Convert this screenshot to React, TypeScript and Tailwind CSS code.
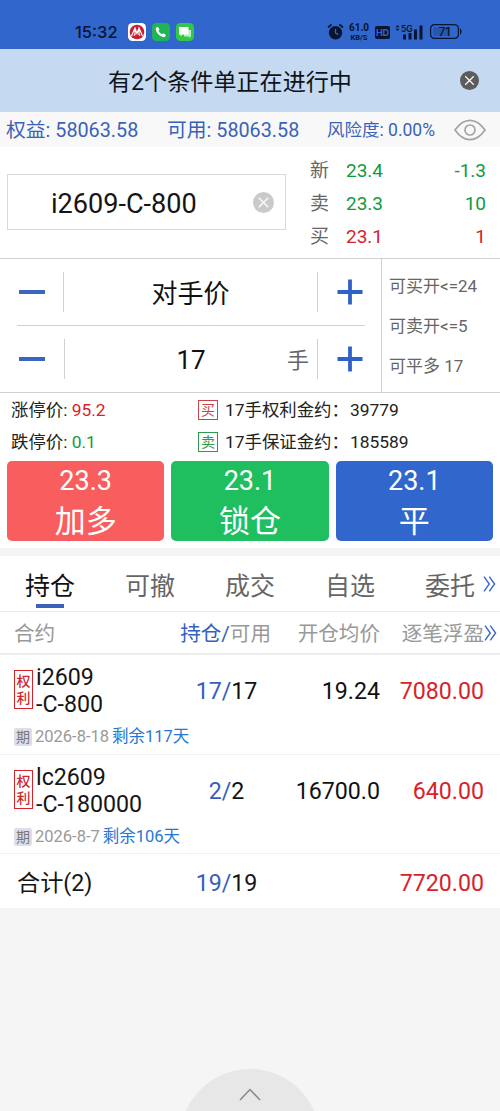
import { useState } from 'react'

const QUOTES = [
  { label: '新', price: '23.4', value: '-1.3', color: 'text-[#0f9b3c]' },
  { label: '卖', price: '23.3', value: '10', color: 'text-[#0f9b3c]' },
  { label: '买', price: '23.1', value: '1', color: 'text-[#d8222a]' },
]

const ACTIONS = [
  { price: '23.3', label: '加多', color: 'bg-[#f95e5e]' },
  { price: '23.1', label: '锁仓', color: 'bg-[#1fbf60]' },
  { price: '23.1', label: '平', color: 'bg-[#3166cc]' },
]

const TABS = ['持仓', '可撤', '成交', '自选', '委托']

const POSITIONS = [
  { name: 'i2609', strike: '-C-800', date: '2026-8-18', left: '剩余117天', held: '17', free: '17', avg: '19.24', profit: '7080.00' },
  { name: 'lc2609', strike: '-C-180000', date: '2026-8-7', left: '剩余106天', held: '2', free: '2', avg: '16700.0', profit: '640.00' },
]

function StatusBar() {
  return (
    <div className="flex h-[49px] items-start bg-[#3166cc] pt-[22px] pl-[75px] text-[#081430]">
      <span className="w-[53px] font-['Inter'] text-[16.5px] leading-5 font-medium">15:32</span>
      <svg className="mt-px h-[18px] w-[18px]" viewBox="0 0 18 18">
        <rect width="18" height="18" rx="4.5" fill="#fff" />
        <circle cx="9" cy="9" r="7.3" fill="#c9202f" />
        <path d="M3.5 13 7 5l2 5.500L11 5l3.500 8M7 5v6.500l-1.200 1M11 5v6.500l1.200 1" fill="none" stroke="#fff" strokeWidth="1.2" />
      </svg>
      <svg className="mt-px ml-[6px] h-[18px] w-[18px]" viewBox="0 0 18 18">
        <rect width="18" height="18" rx="4.5" fill="#20b554" />
        <path d="M4.6 4.3 6 3.9l1.500 2.700-1 1.200c.8 1.500 1.900 2.600 3.400 3.400l1.200-1 2.700 1.500-.4 1.500c-.4.9-1.400 1.200-2.500.9C7.500 13.200 4.800 10.500 3.900 7c-.3-1.200 0-2.200.7-2.700Z" fill="#fff" />
      </svg>
      <svg className="mt-px ml-[6px] h-[18px] w-[18px]" viewBox="0 0 18 18">
        <rect width="18" height="18" rx="4.5" fill="#34c847" />
        <path d="M8 7h7v6.500h-.8V15l-2-1.500H8Z" fill="#b9efbf" />
        <path d="M3 4h9.500v7.500H6.800L4.500 13.300v-1.800H3Z" fill="#fff" />
      </svg>
      <svg className="ml-[133px] h-[19px] w-[17px]" viewBox="0 0 17 19" fill="currentColor">
        <circle cx="8.5" cy="10.8" r="6.7" />
        <path d="M1 5.500 4.600 2.300M16 5.500 12.400 2.300" stroke="currentColor" strokeWidth="1.7" />
        <path d="M8.500 7v4l2.600 1.600" fill="none" stroke="#3166cc" strokeWidth="1.3" />
      </svg>
      <div className="ml-[4px] w-[22px] text-center font-['Roboto'] font-bold">
        <div className="text-[10px] leading-[11px]">61.0</div>
        <div className="text-[7.5px] leading-[9px]">KB/S</div>
      </div>
      <div className="mt-1 ml-[5px] h-[13px] w-[15px] rounded-[2px] bg-[#081430] text-center font-['Inter'] text-[9px] leading-[13px] font-bold text-[#3166cc]">
        HD
      </div>
      <svg className="mt-[2px] ml-[5px] h-[16px] w-[28px]" viewBox="0 0 28 16" fill="currentColor">
        <path d="M.5 3.300 2.500 1l2 2.300ZM.5 4.700l2 2.300 2-2.300Z" />
        <text x="6" y="7.5" fontSize="8.5" fontWeight="600" fontFamily="Inter">5G</text>
        <path d="M8 10.500h3v5H8ZM13.500 9h3v6.500h-3ZM19 5.500h3v10h-3ZM24.500 1.500h3v14h-3Z" />
      </svg>
      <svg className="mt-[2px] ml-[7px] h-[15px] w-[32px]" viewBox="0 0 32 15">
        <rect x=".6" y=".6" width="27.8" height="13.8" rx="4" fill="none" stroke="currentColor" strokeWidth="1.2" />
        <path d="M30 4.500c2 .7 2 5.300 0 6Z" fill="currentColor" />
        <rect x="3" y="3" width="17" height="9" rx="1.5" fill="#2857ae" />
        <text x="14.5" y="11.5" textAnchor="middle" fontSize="11.5" fontWeight="500" fontFamily="Inter" fill="currentColor">71</text>
      </svg>
    </div>
  )
}

function CloseIcon({ size, bg }: { size: string; bg: string }) {
  return (
    <svg className={size} viewBox="0 0 20 20">
      <circle cx="10" cy="10" r="10" fill={bg} />
      <path d="M5.500 5.500l9 9M14.500 5.500l-9 9" stroke="#fff" strokeWidth="1.2" />
    </svg>
  )
}

function EyeIcon() {
  return (
    <svg className="h-[22px] w-8" viewBox="0 0 32 22" fill="none" stroke="#a3a3a3" strokeWidth="1.7">
      <path d="M1 11C5.500 4.500 10.500 1.300 16 1.300S26.500 4.500 31 11c-4.500 6.500-9.500 9.700-15 9.700S5.500 17.500 1 11Z" />
      <circle cx="16" cy="11" r="5" />
    </svg>
  )
}

function MoreIcon() {
  return (
    <svg className="h-4 w-[13px] shrink-0" viewBox="0 0 13 16" fill="none" stroke="#3a66c8" strokeWidth="1.4">
      <path d="M1 .7 6.300 8 1 15.300M6.300.7 11.600 8l-5.300 7.300" />
    </svg>
  )
}

function Stepper({ value, unit }: { value: string; unit?: string }) {
  return (
    <div className="flex h-[66px] items-center">
      <button className="flex w-[46px] pl-[2px]">
        <span className="h-1 w-[26px] bg-[#3a66c0]" />
      </button>
      <div className={`h-10 w-px bg-[#cfcfcf] ${unit ? 'ml-px' : ''}`} />
      <div className={`relative flex-1 text-center text-[26px] leading-10 text-[#111] ${unit ? 'pt-px' : 'pt-1'}`}>
        {value}
        {unit && <span className="absolute top-[2px] right-[8px] text-[22px] text-[#666]">{unit}</span>}
      </div>
      <div className="h-10 w-px bg-[#cfcfcf]" />
      <button className="flex w-[47px] pl-[19px]">
        <svg className="h-[26px] w-[26px] shrink-0" viewBox="0 0 26 26" stroke="#2f62c8" strokeWidth="3.8">
          <path d="M.5 13h25M13 .5v25" />
        </svg>
      </button>
    </div>
  )
}

function PositionRow({ item }: { item: (typeof POSITIONS)[number] }) {
  return (
    <div className="h-[99.5px] border-b border-[#f1f1f1] pl-[14px]">
      <div className="flex pt-[9px]">
        <div className="mt-[6px] h-[39px] w-[19px] border border-[#d8222a] pt-[2px] text-center text-[14px] leading-[17px] font-medium text-[#cf2730]">
          权
          <br />
          利
        </div>
        <div className="w-[125px] pl-[3px] text-[23.2px] leading-[27px] text-[#151515]">
          {item.name}
          <br />
          {item.strike}
        </div>
        <div className="w-[137px] text-center text-[23.2px] leading-[55px] text-[#111]">
          <span className="text-[#3460c0]">{item.held}/</span>
          {item.free}
        </div>
        <div className="w-[85px] text-right text-[23.2px] leading-[55px] text-[#111]">{item.avg}</div>
        <div className="w-[104px] text-right text-[23.2px] leading-[55px] text-[#d8222a]">{item.profit}</div>
      </div>
      <div className="mt-[8px] flex items-center text-[16.5px] leading-5">
        <span className="h-[18px] w-[18px] rounded-[2px] bg-[#dddeea] text-center text-[14px] leading-[18px] text-[#777]">期</span>
        <span className="ml-[3px] text-[#999]">{item.date}</span>
        <span className="ml-[3px] text-[#2478d4]">{item.left}</span>
      </div>
    </div>
  )
}

export default function App() {
  const [tab, setTab] = useState('持仓')

  return (
    <div className="flex h-[1111px] w-[500px] flex-col overflow-hidden bg-white font-['Roboto','Noto_Sans_CJK_SC',sans-serif]">
      <StatusBar />

      {/* Notice */}
      <div className="flex h-[63px] items-center bg-[#c5d9f1] pr-[21px] text-[#101418]">
        <span className="flex-1 pt-[4px] text-center text-[23.1px] leading-8">有2个条件单正在进行中</span>
        <CloseIcon size="h-[19px] w-[19px]" bg="#5c5c5c" />
      </div>

      {/* Account */}
      <div className="flex h-[35px] items-center bg-[#f8f8f8] pl-[6px] text-[19.8px] whitespace-nowrap text-[#3a62b8]">
        <span className="w-[161px] pt-[2px]">权益: 58063.58</span>
        <span className="w-[160px] pt-[2px]">可用: 58063.58</span>
        <span className="w-[127px] pt-[2px] text-[17.5px]">风险度: 0.00%</span>
        <EyeIcon />
      </div>

      {/* Contract and quote */}
      <div className="flex h-[112px] border-b border-[#d0d0d0] pl-[7px]">
        <div className="mt-[27px] flex h-[56px] w-[279px] items-center border border-[#d9d9d9] pr-[11px] pl-[43px]">
          <span className="flex-1 pt-[4px] text-[27.1px] text-[#151515]">i2609-C-800</span>
          <CloseIcon size="h-[21px] w-[21px]" bg="#cacaca" />
        </div>
        <div className="mt-[7.5px] ml-[24px] w-[176px]">
          {QUOTES.map((q) => (
            <div key={q.label} className={`flex h-[33.3px] items-center text-[19px] ${q.color}`}>
              <span className="w-9 text-[#666]">{q.label}</span>
              <span className="flex-1">{q.price}</span>
              <span>{q.value}</span>
            </div>
          ))}
        </div>
      </div>

      {/* Order form */}
      <div className="flex h-[134px] border-b border-[#d0d0d0]">
        <div className="w-[381px] pr-[16px] pl-[17px]">
          <Stepper value="对手价" />
          <div className="h-px bg-[#d0d0d0]" />
          <Stepper value="17" unit="手" />
        </div>
        <div className="flex-1 border-l border-[#d0d0d0] pt-[7px] pl-[7px] text-[17px] leading-10 text-[#666]">
          <div>可买开&lt;=24</div>
          <div>可卖开&lt;=5</div>
          <div>可平多 17</div>
        </div>
      </div>

      {/* Price limits */}
      <div className="grid h-[68px] grid-cols-[187px_1fr] content-start pt-px pl-[11px] text-[17.4px] leading-8 text-[#222]">
        <div>涨停价: <span className="text-[#d8222a]">95.2</span></div>
        <div className="flex items-center">
          <span className="mr-[7px] h-5 w-5 border border-[#c9444a] text-center text-[14px] leading-[18px] text-[#c9444a]">买</span>
          <span className="w-[125px]">17手权利金约：</span>
          <span>39779</span>
        </div>
        <div>跌停价: <span className="text-[#0f9b3c]">0.1</span></div>
        <div className="flex items-center">
          <span className="mr-[7px] h-5 w-5 border border-[#2d9a4f] text-center text-[14px] leading-[18px] text-[#2d9a4f]">卖</span>
          <span className="w-[125px]">17手保证金约：</span>
          <span>185589</span>
        </div>
      </div>

      <div className="flex h-[87px] gap-[7px] px-[7px]">
        {ACTIONS.map((a) => (
          <button key={a.label} className={`h-20 flex-1 rounded-[5px] text-white ${a.color}`}>
            <div className="text-[27px] leading-10">{a.price}</div>
            <div className="pt-[2px] text-[31px] leading-[38px]">{a.label}</div>
          </button>
        ))}
      </div>
      <div className="h-2 bg-[#f5f5f5]" />

      {/* Tabs */}
      <div className="flex h-14 border-b border-[#ededed]">
        {TABS.map((t) => (
          <button
            key={t}
            onClick={() => setTab(t)}
            className={`relative h-14 w-[100px] shrink-0 text-[25px] leading-[61px] ${t === tab ? 'text-[#111]' : 'text-[#666]'}`}
          >
            {t}
            {t === tab && <span className="absolute bottom-1 left-9 h-1 w-7 bg-[#3a62b8]" />}
          </button>
        ))}
        <div className="-ml-[17px] flex items-center">
          <MoreIcon />
        </div>
      </div>

      {/* Table */}
      <div className="flex h-[43px] items-center border-b-2 border-[#ededed] pl-[14px] text-[20.6px] leading-[30px] whitespace-nowrap text-[#999]">
        <span className="w-[140px] pt-[3px]">合约</span>
        <span className="w-[117px] pt-[3px] text-right"><span className="text-[#3460c0]">持仓/</span>可用</span>
        <span className="w-[109px] pt-[3px] text-right">开仓均价</span>
        <span className="w-[104px] pt-[3px] text-right">逐笔浮盈</span>
        <MoreIcon />
      </div>
      {POSITIONS.map((p) => (
        <PositionRow key={p.name} item={p} />
      ))}
      <div className="flex h-[54px] shrink-0 items-center pt-1 pl-[17px] text-[23.2px] text-[#151515]">
        <span className="w-[137px]">合计(2)</span>
        <span className="w-[145px] text-center"><span className="text-[#3460c0]">19/</span>19</span>
        <span className="w-[185px] text-right text-[#d8222a]">7720.00</span>
      </div>

      {/* Pull-up drawer handle */}
      <div className="flex flex-1 items-end justify-center overflow-hidden bg-[#f5f5f5]">
        <svg className="h-[42px] w-[140px]" viewBox="0 0 140 42">
          <circle cx="70" cy="70" r="70" fill="#e7e7e7" />
          <path d="M60 31 70 20.500 80 31" fill="none" stroke="#888" strokeWidth="1.5" />
        </svg>
      </div>
    </div>
  )
}
